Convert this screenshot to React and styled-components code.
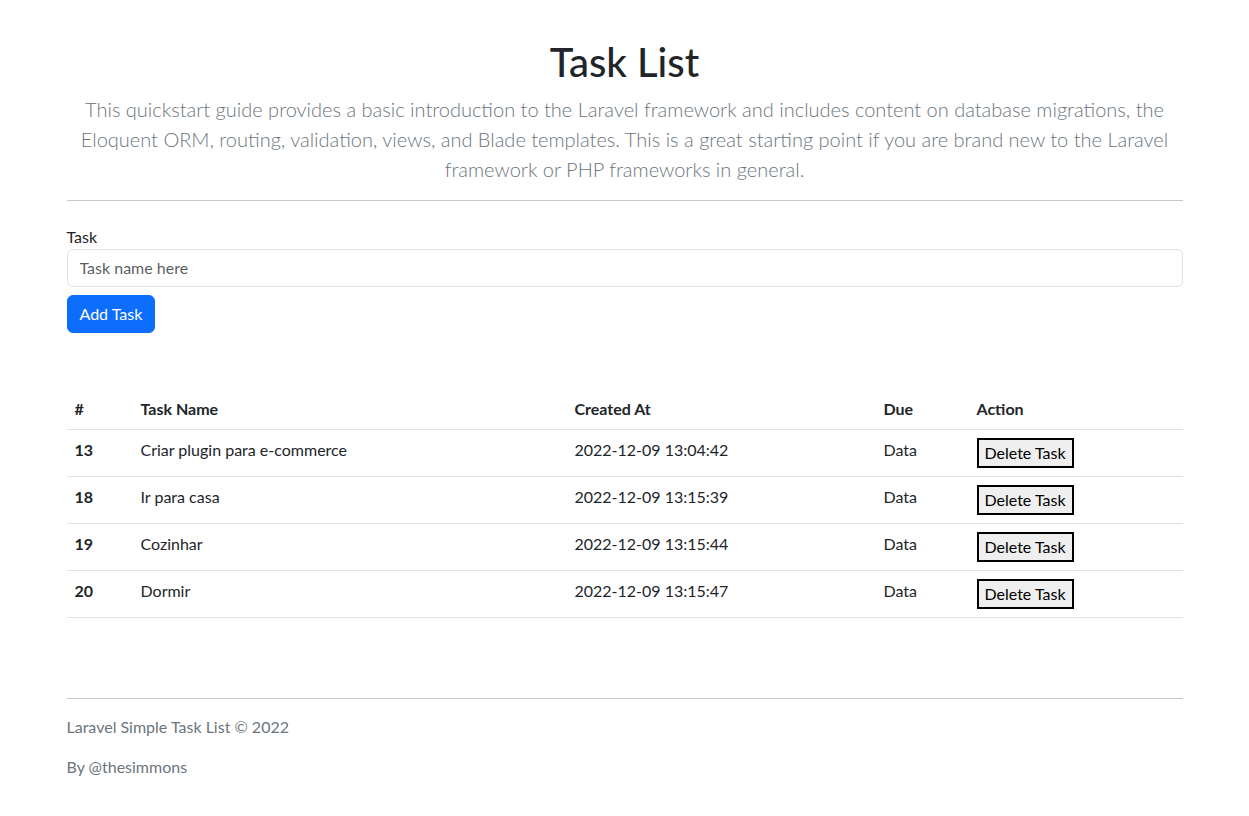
import React from 'react';
import styled, { createGlobalStyle } from 'styled-components';

const GlobalStyle = createGlobalStyle`
  *, *::before, *::after { box-sizing: border-box; }
  body {
    margin: 0;
    background: #fff;
    color: #212529;
    font: 16px/1.5 Lato, "Noto Sans", sans-serif;
  }
`;

const Container = styled.div`
  max-width: 1140px;
  margin: 0 auto;
  padding: 38px 12px 20px;
`;

const Header = styled.header`
  text-align: center;

  h1 {
    margin: 0 0 8px;
    font-size: 40px;
    font-weight: 500;
    line-height: 1.2;
  }

  p {
    margin: 0;
    padding: 0 14px;
    font-size: 20px;
    font-weight: 300;
    color: #6c757d;
  }
`;

const Rule = styled.hr`
  margin: 16px 0;
  border: 0;
  border-top: 1px solid #212529;
  opacity: 0.25;
`;

const Form = styled.form`
  padding-top: 8px;

  label {
    display: block;
    margin: 0;
  }
`;

const Input = styled.input`
  display: block;
  width: 100%;
  padding: 6px 12px;
  font: inherit;
  line-height: 24px;
  color: #212529;
  border: 1px solid #dee2e6;
  border-radius: 6px;
  margin-bottom: 8px;

  &::placeholder { color: rgba(33, 37, 41, 0.75); }
`;

const PrimaryButton = styled.button`
  padding: 6px 12px;
  font: inherit;
  line-height: 24px;
  color: #fff;
  background: #0d6efd;
  border: 1px solid #0d6efd;
  border-radius: 6px;
`;

const Table = styled.table`
  width: 100%;
  margin: 56px 0 16px;
  border-collapse: collapse;

  th, td {
    padding: 8px;
    text-align: left;
    vertical-align: top;
    line-height: 24px;
    border-bottom: 1px solid #dee2e6;
  }

  th { font-weight: 700; }
`;

const DeleteButton = styled.button`
  display: inline-block;
  vertical-align: top;
  padding: 1px 6px;
  font: inherit;
  line-height: 24px;
  color: #000;
  background: #efefef;
  border: 2px solid #000;
`;

const Footer = styled.footer`
  margin-top: 80px;
  color: #6c757d;

  hr { margin-top: 0; }
  p { margin: 0 0 16px; }
`;

const tasks = [
  { id: 13, name: 'Criar plugin para e-commerce', created: '2022-12-09 13:04:42' },
  { id: 18, name: 'Ir para casa', created: '2022-12-09 13:15:39' },
  { id: 19, name: 'Cozinhar', created: '2022-12-09 13:15:44' },
  { id: 20, name: 'Dormir', created: '2022-12-09 13:15:47' },
];

export default function App() {
  return (
    <Container>
      <GlobalStyle />
      <Header>
        <h1>Task List</h1>
        <p>
          This quickstart guide provides a basic introduction to the Laravel framework and includes content on
          database migrations, the Eloquent ORM, routing, validation, views, and Blade templates. This is a great
          starting point if you are brand new to the Laravel framework or PHP frameworks in general.
        </p>
      </Header>
      <Rule />
      <Form onSubmit={(e) => e.preventDefault()}>
        <label htmlFor="task">Task</label>
        <Input id="task" placeholder="Task name here" />
        <PrimaryButton type="submit">Add Task</PrimaryButton>
      </Form>
      <Table>
        <colgroup>
          <col style={{ width: 66 }} />
          <col style={{ width: 434 }} />
          <col style={{ width: 309 }} />
          <col style={{ width: 93 }} />
          <col />
        </colgroup>
        <thead>
          <tr>
            <th>#</th>
            <th>Task Name</th>
            <th>Created At</th>
            <th>Due</th>
            <th>Action</th>
          </tr>
        </thead>
        <tbody>
          {tasks.map((t) => (
            <tr key={t.id}>
              <th>{t.id}</th>
              <td>{t.name}</td>
              <td>{t.created}</td>
              <td>Data</td>
              <td><DeleteButton>Delete Task</DeleteButton></td>
            </tr>
          ))}
        </tbody>
      </Table>
      <Footer>
        <Rule />
        <p>Laravel Simple Task List © 2022</p>
        <p>By @thesimmons</p>
      </Footer>
    </Container>
  );
}
